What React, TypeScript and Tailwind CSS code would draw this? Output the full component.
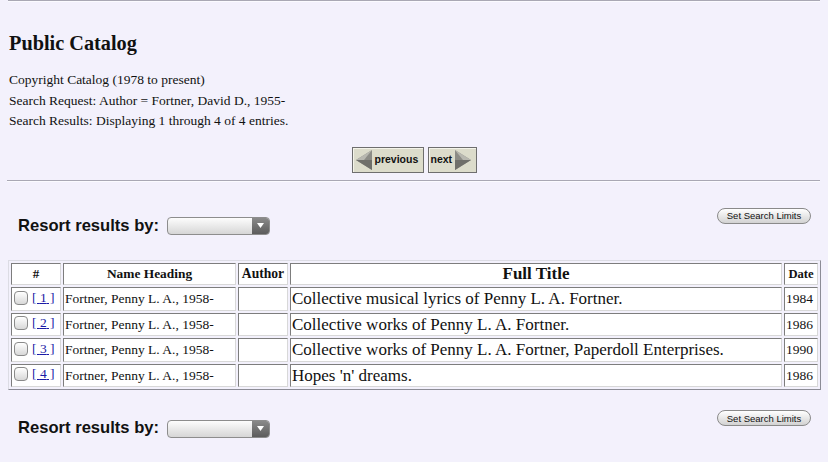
import React from "react";

const serif = { fontFamily: '"Liberation Serif", "Times New Roman", serif' };

function NavButton({ dir }: { dir: "prev" | "next" }) {
    const arrow = (
        <svg width="18" height="22" viewBox="0 0 18 22">
            {dir === "prev" ? (
                <>
                    <polygon points="17,1 1,11 17,21" fill="#8c8c86" />
                    <polygon points="17,1 1,11 9,11" fill="#b8b8b0" />
                    <polygon points="17,21 1,11 17,11" fill="#6f6f6a" />
                </>
            ) : (
                <>
                    <polygon points="1,1 17,11 1,21" fill="#8c8c86" />
                    <polygon points="1,1 17,11 9,11" fill="#b8b8b0" />
                    <polygon points="1,21 17,11 1,11" fill="#6f6f6a" />
                </>
            )}
        </svg>
    );
    return (
        <button
            className={`flex items-center h-[26px] px-[2px] bg-[#dcdccb] border border-[#6e6e6e] shadow-[inset_1px_1px_0_#f4f4ea] gap-[2px] ${
                dir === "prev" ? "w-[72px]" : "w-[49px]"
            }`}
        >
            {dir === "prev" && arrow}
            <span className="text-[10.5px] font-bold text-[#111] font-['Liberation_Sans',Arial,sans-serif]">
                {dir === "prev" ? "previous" : "next"}
            </span>
            {dir === "next" && arrow}
        </button>
    );
}

function ResortRow() {
    return (
        <div className="flex items-start justify-between">
            <div className="flex items-center mt-[10px] pl-[10px] gap-[8px] font-['Liberation_Sans',Arial,sans-serif]">
                <span className="text-[16.6px] font-bold text-[#111]">Resort results by:</span>
                <div className="relative w-[103px] h-[18px] rounded-[4px] border border-[#8d8d8d] bg-gradient-to-b from-[#fdfdfd] to-[#d6d6d6] overflow-hidden">
                    <div className="absolute right-0 top-0 bottom-0 w-[17px] bg-gradient-to-b from-[#8a8a8a] to-[#5c5c5c] flex items-center justify-center">
                        <svg width="7" height="5" viewBox="0 0 7 5">
                            <polygon points="0,0 7,0 3.5,5" fill="#fff" />
                        </svg>
                    </div>
                </div>
            </div>
            <button className="mt-[4px] mr-[9px] h-[16px] w-[94px] rounded-full border border-[#8a8a8a] bg-gradient-to-b from-[#ffffff] to-[#d2d2d2] text-[9.5px] text-[#111] leading-none font-['Liberation_Sans',Arial,sans-serif]">
                Set Search Limits
            </button>
        </div>
    );
}

const rows = [
    { n: 1, title: "Collective musical lyrics of Penny L. A. Fortner.", date: "1984" },
    { n: 2, title: "Collective works of Penny L. A. Fortner.", date: "1986" },
    { n: 3, title: "Collective works of Penny L. A. Fortner, Paperdoll Enterprises.", date: "1990" },
    { n: 4, title: "Hopes 'n' dreams.", date: "1986" },
];

const cell = "bg-white border border-t-[#7d7d7d] border-l-[#7d7d7d] border-r-[#d8d8d8] border-b-[#d8d8d8] px-[1px] leading-[18px]";

export default function App() {
    return (
        <div className="min-h-[462px] bg-[#f3f1fc] text-[#111] px-[8px]" style={serif}>
            {/* top rule */}
            <div className="h-[2px] border-t border-[#a9a8b4] border-b border-b-[#fbfbff]" />

            <h2 className="text-[20.3px] font-bold mt-[29px] leading-[24px] pl-[1px]">Public Catalog</h2>

            <div className="text-[13.5px] leading-[20.5px] mt-[15px] pl-[1px]">
                <div>Copyright Catalog (1978 to present)</div>
                <div>Search Request: Author = Fortner, David D., 1955-</div>
                <div>Search Results: Displaying 1 through 4 of 4 entries.</div>
            </div>

            <div className="flex justify-center gap-[4px] mt-[15px]">
                <NavButton dir="prev" />
                <NavButton dir="next" />
            </div>

            {/* middle rule */}
            <div className="mt-[7px] h-[2px] border-t border-[#a9a8b4] border-b border-b-[#fbfbff] -ml-[1px]" />

            <div className="mt-[22px]">
                <ResortRow />
            </div>

            <table className="mt-[22px] w-[813px] border-separate border-spacing-[2px] border border-l-[#dcdce4] border-t-[#dcdce4] border-r-[#8c8c96] border-b-[#8c8c96]">
                <thead>
                    <tr>
                        <th className={`${cell} h-[22px] w-[50px] text-[13px]`}>#</th>
                        <th className={`${cell} h-[22px] w-[173px] text-[13.4px]`}>Name Heading</th>
                        <th className={`${cell} h-[22px] w-[50px] text-[13.6px]`}>Author</th>
                        <th className={`${cell} h-[22px] text-[17px]`}>Full Title</th>
                        <th className={`${cell} h-[22px] w-[34px] text-[12.6px]`}>Date</th>
                    </tr>
                </thead>
                <tbody>
                    {rows.map((r) => (
                        <tr key={r.n}>
                            <td className={`${cell} h-[23.5px] text-[13.5px] whitespace-nowrap`}>
                                <span className="inline-flex items-center gap-[4px] pl-[1px]">
                                    <span className="inline-block w-[14px] h-[14px] rounded-[4px] border border-[#8a8a8a] bg-gradient-to-b from-[#ffffff] to-[#d8d8d8]" />
                                    <a className="text-[#1a1aa6] underline">[ {r.n} ]</a>
                                </span>
                            </td>
                            <td className={`${cell} h-[23.5px] text-[13.5px] whitespace-nowrap`}>Fortner, Penny L. A., 1958-</td>
                            <td className={`${cell} h-[23.5px]`}></td>
                            <td className={`${cell} h-[23.5px] text-[17px]`}>{r.title}</td>
                            <td className={`${cell} h-[23.5px] text-[13.5px]`}>{r.date}</td>
                        </tr>
                    ))}
                </tbody>
            </table>

            <div className="mt-[16px]">
                <ResortRow />
            </div>
        </div>
    );
}
